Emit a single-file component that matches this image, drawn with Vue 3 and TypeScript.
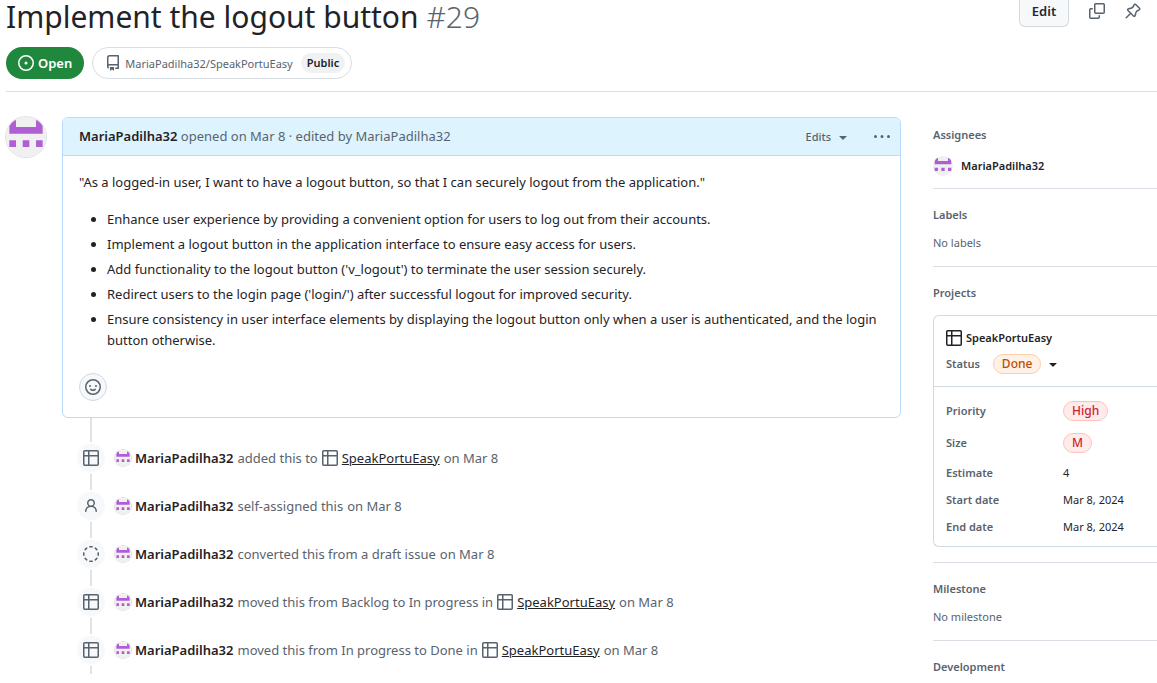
<script setup lang="ts">
type IconName = 'open' | 'repo' | 'table' | 'person' | 'draft' | 'dots' | 'caret' | 'smiley' | 'copy' | 'pin'

interface TimelineEvent {
  icon: IconName
  text: string
  project?: string
}

const icons: Record<IconName, string> = {
  open: 'M8 9.5a1.5 1.5 0 1 0 0-3 1.5 1.5 0 0 0 0 3ZM8 0a8 8 0 1 1 0 16A8 8 0 0 1 8 0ZM1.5 8a6.5 6.5 0 1 0 13 0 6.5 6.5 0 0 0-13 0Z',
  repo: 'M2 2.5A2.5 2.5 0 0 1 4.5 0h8.75a.75.75 0 0 1 .75.75v12.5a.75.75 0 0 1-.75.75h-2.5a.75.75 0 0 1 0-1.5h1.75v-2h-8a1 1 0 0 0-.714 1.7.75.75 0 1 1-1.072 1.05A2.495 2.495 0 0 1 2 11.5Zm10.5-1h-8a1 1 0 0 0-1 1v6.708A2.486 2.486 0 0 1 4.5 9h8ZM5 12.25a.25.25 0 0 1 .25-.25h3.5a.25.25 0 0 1 .25.25v3.25a.25.25 0 0 1-.4.2l-1.45-1.087a.249.249 0 0 0-.3 0L5.4 15.7a.25.25 0 0 1-.4-.2Z',
  table: 'M0 1.75C0 .784.784 0 1.75 0h12.5C15.216 0 16 .784 16 1.75v12.5A1.75 1.75 0 0 1 14.25 16H1.75A1.75 1.75 0 0 1 0 14.25ZM6.5 6.5v8h7.75a.25.25 0 0 0 .25-.25V6.5Zm8-1.5V1.75a.25.25 0 0 0-.25-.25H6.5V5Zm-13 1.5v7.75c0 .138.112.25.25.25H5v-8ZM5 5V1.5H1.75a.25.25 0 0 0-.25.25V5Z',
  person: 'M10.561 8.073a6.005 6.005 0 0 1 3.432 5.142.75.75 0 1 1-1.498.07 4.5 4.5 0 0 0-8.99 0 .75.75 0 0 1-1.498-.07 6.004 6.004 0 0 1 3.431-5.142 3.999 3.999 0 1 1 5.123 0ZM10.5 5a2.5 2.5 0 1 0-5 0 2.5 2.5 0 0 0 5 0Z',
  draft: 'M14.307 11.655a.75.75 0 0 1 .165 1.048 8.05 8.05 0 0 1-1.769 1.77.75.75 0 0 1-.883-1.214 6.552 6.552 0 0 0 1.44-1.439.75.75 0 0 1 1.047-.165Zm-2.652-9.962a.75.75 0 0 1 1.048-.165 8.05 8.05 0 0 1 1.77 1.769.75.75 0 0 1-1.214.883 6.552 6.552 0 0 0-1.439-1.44.75.75 0 0 1-.165-1.047ZM6.749.097a8.07 8.07 0 0 1 2.502 0 .75.75 0 1 1-.233 1.482 6.55 6.55 0 0 0-2.036 0A.751.751 0 0 1 6.749.097Zm-5.056 4.25a.75.75 0 0 1-.165-1.05 8.05 8.05 0 0 1 1.769-1.769.75.75 0 0 1 .883 1.213 6.6 6.6 0 0 0-1.44 1.439.75.75 0 0 1-1.047.167ZM.955 6.125a.75.75 0 0 1 .624.857 6.55 6.55 0 0 0 0 2.036.75.75 0 1 1-1.482.233 8.07 8.07 0 0 1 0-2.502.75.75 0 0 1 .858-.624Zm14.09 0a.75.75 0 0 1 .858.624 8.07 8.07 0 0 1 0 2.502.75.75 0 1 1-1.482-.233 6.55 6.55 0 0 0 0-2.036.75.75 0 0 1 .624-.857Zm-13.352 5.53a.75.75 0 0 1 1.048.165 6.552 6.552 0 0 0 1.439 1.44.75.75 0 0 1-.883 1.212 8.05 8.05 0 0 1-1.77-1.769.75.75 0 0 1 .166-1.048Zm4.432 3.39a.75.75 0 0 1 .857-.624 6.55 6.55 0 0 0 2.036 0 .75.75 0 1 1 .233 1.482 8.07 8.07 0 0 1-2.502 0 .75.75 0 0 1-.624-.858Z',
  dots: 'M8 9a1.5 1.5 0 1 0 0-3 1.5 1.5 0 0 0 0 3ZM1.5 9a1.5 1.5 0 1 0 0-3 1.5 1.5 0 0 0 0 3Zm13 0a1.5 1.5 0 1 0 0-3 1.5 1.5 0 0 0 0 3Z',
  caret: 'm4.427 7.427 3.396 3.396a.25.25 0 0 0 .354 0l3.396-3.396A.25.25 0 0 0 11.396 7H4.604a.25.25 0 0 0-.177.427Z',
  smiley: 'M8 0a8 8 0 1 1 0 16A8 8 0 0 1 8 0ZM1.5 8a6.5 6.5 0 1 0 13 0 6.5 6.5 0 0 0-13 0Zm3.82 1.636a.75.75 0 0 1 1.04.18c.35.42.9.684 1.64.684s1.29-.264 1.64-.684a.75.75 0 0 1 1.22.87C10.3 11.5 9.3 12 8 12s-2.3-.5-2.86-1.314a.75.75 0 0 1 .18-1.05ZM5 8a1 1 0 1 0 0-2 1 1 0 0 0 0 2Zm6 0a1 1 0 1 0 0-2 1 1 0 0 0 0 2Z',
  copy: 'M5 1.75C5 .784 5.784 0 6.75 0h7.5C15.216 0 16 .784 16 1.75v7.5A1.75 1.75 0 0 1 14.25 11h-7.5A1.75 1.75 0 0 1 5 9.25Zm1.75-.25a.25.25 0 0 0-.25.25v7.5c0 .138.112.25.25.25h7.5a.25.25 0 0 0 .25-.25v-7.5a.25.25 0 0 0-.25-.25ZM0 6.75C0 5.784.784 5 1.75 5h1.5a.75.75 0 0 1 0 1.5h-1.5a.25.25 0 0 0-.25.25v7.5c0 .138.112.25.25.25h7.5a.25.25 0 0 0 .25-.25v-1.5a.75.75 0 0 1 1.5 0v1.5A1.75 1.75 0 0 1 9.25 16h-7.5A1.75 1.75 0 0 1 0 14.25Z',
  pin: 'm11.294.984 3.722 3.722a1.75 1.75 0 0 1-.504 2.826l-1.327.613a3.089 3.089 0 0 0-1.707 2.084l-.584 2.454c-.317 1.332-1.972 1.8-2.94.832L5.75 11.311 1.78 15.28a.749.749 0 1 1-1.06-1.06l3.969-3.97-2.204-2.204c-.968-.968-.5-2.623.832-2.94l2.454-.584a3.08 3.08 0 0 0 2.084-1.707l.613-1.327a1.75 1.75 0 0 1 2.826-.504ZM6.283 9.723l2.732 2.731a.25.25 0 0 0 .42-.119l.584-2.454a4.586 4.586 0 0 1 2.537-3.098l1.328-.613a.25.25 0 0 0 .072-.404l-3.722-3.722a.25.25 0 0 0-.404.072l-.613 1.328a4.584 4.584 0 0 1-3.098 2.537l-2.454.584a.25.25 0 0 0-.119.42l2.731 2.732Z',
}

const user = 'MariaPadilha32'
const project = 'SpeakPortuEasy'

const bullets: string[] = [
  'Enhance user experience by providing a convenient option for users to log out from their accounts.',
  'Implement a logout button in the application interface to ensure easy access for users.',
  "Add functionality to the logout button ('v_logout') to terminate the user session securely.",
  "Redirect users to the login page ('login/') after successful logout for improved security.",
  'Ensure consistency in user interface elements by displaying the logout button only when a user is authenticated, and the login button otherwise.',
]

const events: TimelineEvent[] = [
  { icon: 'table', text: 'added this to', project },
  { icon: 'person', text: 'self-assigned this' },
  { icon: 'draft', text: 'converted this from a draft issue' },
  { icon: 'table', text: 'moved this from Backlog to In progress in', project },
  { icon: 'table', text: 'moved this from In progress to Done in', project },
]

const fields: { name: string; value: string; pill?: boolean }[] = [
  { name: 'Priority', value: 'High', pill: true },
  { name: 'Size', value: 'M', pill: true },
  { name: 'Estimate', value: '4' },
  { name: 'Start date', value: 'Mar 8, 2024' },
  { name: 'End date', value: 'Mar 8, 2024' },
]

/* Purple cells of the 420-unit identicon grid. */
const identicon = 'M35 35h70v70h210V35h70v140H35ZM35 245h70v70H35ZM175 245h70v70h-70ZM315 245h70v70h-70Z'
</script>

<template>
  <div class="page">
    <header class="head">
      <div class="title-row">
        <h1>Implement the logout button <span class="number">#29</span></h1>
        <div class="actions">
          <button class="edit" type="button">Edit</button>
          <button class="icon-btn" type="button" aria-label="Copy link"><svg class="icon" viewBox="0 0 16 16"><path :d="icons.copy" /></svg></button>
          <button class="icon-btn" type="button" aria-label="Pin"><svg class="icon" viewBox="0 0 16 16"><path :d="icons.pin" /></svg></button>
        </div>
      </div>
      <div class="meta-row">
        <span class="state"><svg class="icon" viewBox="0 0 16 16"><path :d="icons.open" /></svg>Open</span>
        <span class="repo">
          <svg class="icon" viewBox="0 0 16 16"><path :d="icons.repo" /></svg>
          <a href="#">{{ user }}/{{ project }}</a>
          <span class="public">Public</span>
        </span>
      </div>
    </header>

    <div class="columns">
      <a class="author" href="#" :aria-label="user">
        <svg class="avatar" viewBox="0 0 420 420"><rect width="420" height="420" fill="#f0f0f0" /><path :d="identicon" fill="#b05fd3" /></svg>
      </a>

      <main class="thread">
        <article class="comment">
          <header class="comment-head">
            <p class="byline"><a class="name" href="#">{{ user }}</a> opened on Mar 8 · edited by {{ user }}</p>
            <button class="edits" type="button">Edits<svg class="icon" viewBox="0 0 16 16"><path :d="icons.caret" /></svg></button>
            <button class="more" type="button" aria-label="More options"><svg class="icon" viewBox="0 0 16 16"><path :d="icons.dots" /></svg></button>
          </header>
          <div class="comment-body">
            <p>"As a logged-in user, I want to have a logout button, so that I can securely logout from the application."</p>
            <ul>
              <li v-for="item in bullets" :key="item">{{ item }}</li>
            </ul>
            <button class="react" type="button" aria-label="Add reaction"><svg class="icon" viewBox="0 0 16 16"><path :d="icons.smiley" /></svg></button>
          </div>
        </article>

        <ol class="timeline">
          <li v-for="(event, index) in events" :key="index" class="event">
            <span class="badge"><svg class="icon" viewBox="0 0 16 16"><path :d="icons[event.icon]" /></svg></span>
            <svg class="avatar small" viewBox="0 0 420 420"><rect width="420" height="420" fill="#f0f0f0" /><path :d="identicon" fill="#b05fd3" /></svg>
            <a class="name" href="#">{{ user }}</a>
            <span>{{ event.text }}</span>
            <a v-if="event.project" class="project-link" href="#"><svg class="icon" viewBox="0 0 16 16"><path :d="icons.table" /></svg><span>{{ event.project }}</span></a>
            <span>on Mar 8</span>
          </li>
        </ol>
      </main>

      <aside class="side">
        <section>
          <h2>Assignees</h2>
          <a class="assignee" href="#">
            <svg class="avatar side-avatar" viewBox="0 0 420 420"><rect width="420" height="420" fill="#f0f0f0" /><path :d="identicon" fill="#b05fd3" /></svg>
            {{ user }}
          </a>
        </section>
        <section>
          <h2>Labels</h2>
          <p>No labels</p>
        </section>
        <section>
          <h2>Projects</h2>
          <div class="project-card">
            <div class="project-top">
              <a class="project-name" href="#"><svg class="icon" viewBox="0 0 16 16"><path :d="icons.table" /></svg>{{ project }}</a>
              <div class="status">
                <span class="label">Status</span>
                <button type="button"><span class="pill done">Done</span><svg class="icon" viewBox="0 0 16 16"><path :d="icons.caret" /></svg></button>
              </div>
            </div>
            <dl class="fields">
              <div v-for="field in fields" :key="field.name" class="field" :class="{ tall: field.pill }">
                <dt class="label">{{ field.name }}</dt>
                <dd><span :class="{ pill: field.pill }">{{ field.value }}</span></dd>
              </div>
            </dl>
          </div>
        </section>
        <section>
          <h2>Milestone</h2>
          <p>No milestone</p>
        </section>
        <section>
          <h2>Development</h2>
        </section>
      </aside>
    </div>
  </div>
</template>

<style>
body {
  overflow: hidden;
  background: #fff;
}
</style>

<style scoped>
.page {
  box-sizing: border-box;
  padding-left: 6px;
  color: #1f2328;
  font: 13px/21px "Noto Sans", "Open Sans", sans-serif;
}
h1, h2, p, ul, ol, dl, dd { margin: 0; padding: 0; }
a { color: inherit; text-decoration: none; }
button {
  border: 0;
  padding: 0;
  background: none;
  color: inherit;
  font: inherit;
  cursor: pointer;
}
.icon {
  display: block;
  flex: none;
  width: 16px;
  height: 16px;
  fill: currentColor;
}
.head {
  padding-bottom: 12px;
  border-bottom: 1px solid #d8dee4;
}
.title-row {
  display: flex;
  justify-content: space-between;
  height: 35px;
}
h1 {
  font-size: 30px;
  line-height: 34px;
  font-weight: 400;
  white-space: nowrap;
}
.number { color: #59636e; font-weight: 300; }
.actions {
  display: flex;
  align-items: flex-start;
  padding-right: 8px;
}
.edit {
  box-sizing: border-box;
  width: 50px;
  height: 27px;
  margin-right: 12px;
  border: 1px solid #d1d9e0;
  border-top: 0;
  border-radius: 0 0 6px 6px;
  background: #f6f8fa;
  color: #25292e;
  line-height: 22px;
  padding-bottom: 4px;
  font-weight: 600;
}
.icon-btn {
  display: grid;
  place-items: center;
  width: 32px;
  height: 22px;
  margin-left: 4px;
  color: #59636e;
}
.icon-btn:nth-child(2) { margin-left: 0; }
.meta-row {
  display: flex;
  gap: 8px;
  margin-top: 12px;
}
.state, .repo {
  box-sizing: border-box;
  display: flex;
  align-items: center;
  height: 32px;
  border-radius: 16px;
}
.state {
  gap: 4px;
  padding: 0 12px;
  background: #1f883d;
  color: #fff;
  font-weight: 600;
}
.repo {
  padding: 0 6px 0 12px;
  border: 1px solid #d8dee4;
  color: #59636e;
  font-size: 11px;
}
.repo a { margin: 0 8px 0 4px; }
.public {
  padding: 0 6px;
  border-radius: 10px;
  background: #eff1f3;
  color: #1f2328;
  font-weight: 600;
  line-height: 20px;
}
.columns {
  display: flex;
  align-items: flex-start;
  padding-top: 25px;
}
.avatar {
  display: block;
  flex: none;
  width: 40px;
  height: 40px;
  border-radius: 50%;
  box-shadow: 0 0 0 1px #dfe1e4;
}
.author { margin-right: 16px; }
.thread { flex: 1; min-width: 0; }
.comment {
  border: 1px solid #b6dcff;
  border-radius: 6px;
  background: #fff;
}
.comment-head {
  display: flex;
  align-items: center;
  height: 37px;
  padding: 0 10px 0 16px;
  border-bottom: 1px solid #b6dcff;
  border-radius: 5px 5px 0 0;
  background: #ddf4ff;
  color: #59636e;
}
.byline { flex: 1; }
.name { color: #1f2328; font-weight: 600; }
.edits {
  display: flex;
  align-items: center;
  gap: 4px;
  margin-right: 23px;
  font-size: 11px;
  font-weight: 500;
}
.comment-body { padding: 16px; }
.comment-body ul { padding-left: 28px; margin: 16px 0 22px; }
.comment-body li + li { margin-top: 4px; }
.react {
  box-sizing: border-box;
  display: grid;
  place-items: center;
  width: 28px;
  height: 28px;
  border: 1px solid #d1d9e0;
  border-radius: 50%;
  background: #f6f8fa;
  color: #59636e;
}
.timeline {
  list-style: none;
  padding: 16px 0 0 15px;
  background: linear-gradient(#dde3e9, #dde3e9) 28px 0 / 2px 100% no-repeat;
}
.event {
  display: flex;
  align-items: center;
  gap: 4px;
  height: 48px;
  color: #59636e;
}
.badge {
  display: grid;
  place-items: center;
  width: 28px;
  height: 28px;
  margin-right: 6px;
  border-radius: 50%;
  background: #f6f8fa;
  box-shadow: 0 0 0 2px #fff;
}
.small { width: 16px; height: 16px; }
.project-link {
  display: flex;
  align-items: center;
  gap: 4px;
}
.project-link span { color: #1f2328; text-decoration: underline; }
.side {
  width: 224px;
  margin-left: 32px;
  padding-top: 9px;
  color: #59636e;
  font-size: 11px;
  line-height: 18px;
}
section {
  padding-bottom: 12px;
  border-bottom: 1px solid #d8dee4;
}
section + section { padding-top: 17px; }
section:last-child { border: 0; padding-bottom: 0; }
section p { padding-bottom: 2px; }
h2 {
  margin-bottom: 10px;
  font-size: 11px;
  font-weight: 600;
  line-height: 18px;
}
section:last-child h2 { margin: 0; }
.assignee {
  display: flex;
  align-items: center;
  gap: 8px;
  height: 20px;
  padding-top: 2px;
  color: #1f2328;
  font-weight: 600;
}
.side-avatar { width: 20px; height: 20px; box-shadow: none; }
.project-card {
  margin: 13px 0 3px;
  border: 1px solid #d1d9e0;
  border-right: 0;
  border-radius: 6px 0 0 6px;
}
.project-top {
  padding: 13px 12px 12px;
  border-bottom: 1px solid #d1d9e0;
}
.project-name {
  display: flex;
  align-items: center;
  gap: 4px;
  color: #1f2328;
  font-weight: 600;
}
.status {
  display: flex;
  align-items: center;
  gap: 13px;
  margin-top: 7px;
}
.status button {
  display: flex;
  align-items: center;
  gap: 4px;
  color: #1f2328;
}
.label { font-weight: 600; }
.pill {
  box-sizing: border-box;
  display: block;
  height: 20px;
  padding: 0 8px;
  border: 1px solid #ffc1bc;
  border-radius: 10px;
  background: #ffebe9;
  color: #cf222e;
  font-size: 12px;
  font-weight: 500;
  line-height: 18px;
}
.done {
  border-color: #fcceaa;
  background: #fff1e5;
  color: #bc4c00;
}
.fields {
  display: flex;
  flex-direction: column;
  gap: 8px;
  padding: 12px 12px 10px;
}
.field {
  display: flex;
  align-items: center;
  height: 19px;
}
.tall { height: 24px; }
.field dt { width: 117px; }
.field dd { color: #1f2328; }
</style>
